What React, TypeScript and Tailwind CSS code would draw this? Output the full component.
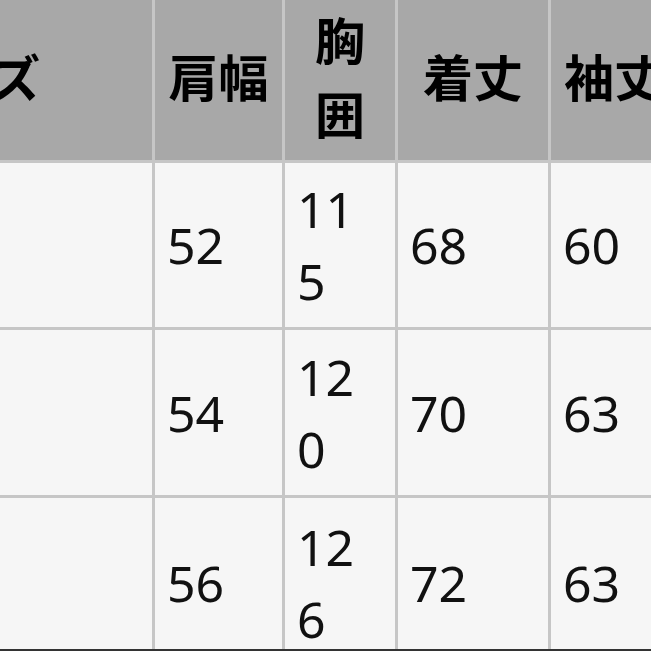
const cols = 'grid-cols-[372px_127px_110px_150px_126px]';

const header = ['サイズ', '肩幅', '胸囲', '着丈', '袖丈'];

const rows = [
  ['', '52', '115', '68', '60'],
  ['', '54', '120', '70', '63'],
  ['', '56', '126', '72', '63'],
];

export default function App() {
  return (
    <div className="h-[651px] w-[651px] overflow-hidden bg-[#f6f6f6]">
      <div className="h-[649px] overflow-hidden">
        <div
          className={`ml-[-220px] grid w-max ${cols} grid-rows-[160px_164px_165px_170px] gap-[3px] bg-[#c6c6c6] font-['Noto_Sans','Noto_Sans_CJK_JP',sans-serif] text-[#111]`}
        >
          {header.map((h, i) => (
            <div
              key={i}
              className="flex items-center justify-center break-all bg-[#a8a8a8] px-[12px] pb-[4px] text-center text-[50px] font-semibold leading-[74px] text-black"
            >
              {h}
            </div>
          ))}
          {rows.map((r, ri) =>
            r.map((c, ci) => (
              <div
                key={`${ri}-${ci}`}
                className="flex items-center break-all bg-[#f6f6f6] pl-[12px] pr-[16px] text-[50px] leading-[72px]"
              >
                {c}
              </div>
            )),
          )}
        </div>
      </div>
      <div className="h-[2px] bg-[#333]" />
    </div>
  );
}
